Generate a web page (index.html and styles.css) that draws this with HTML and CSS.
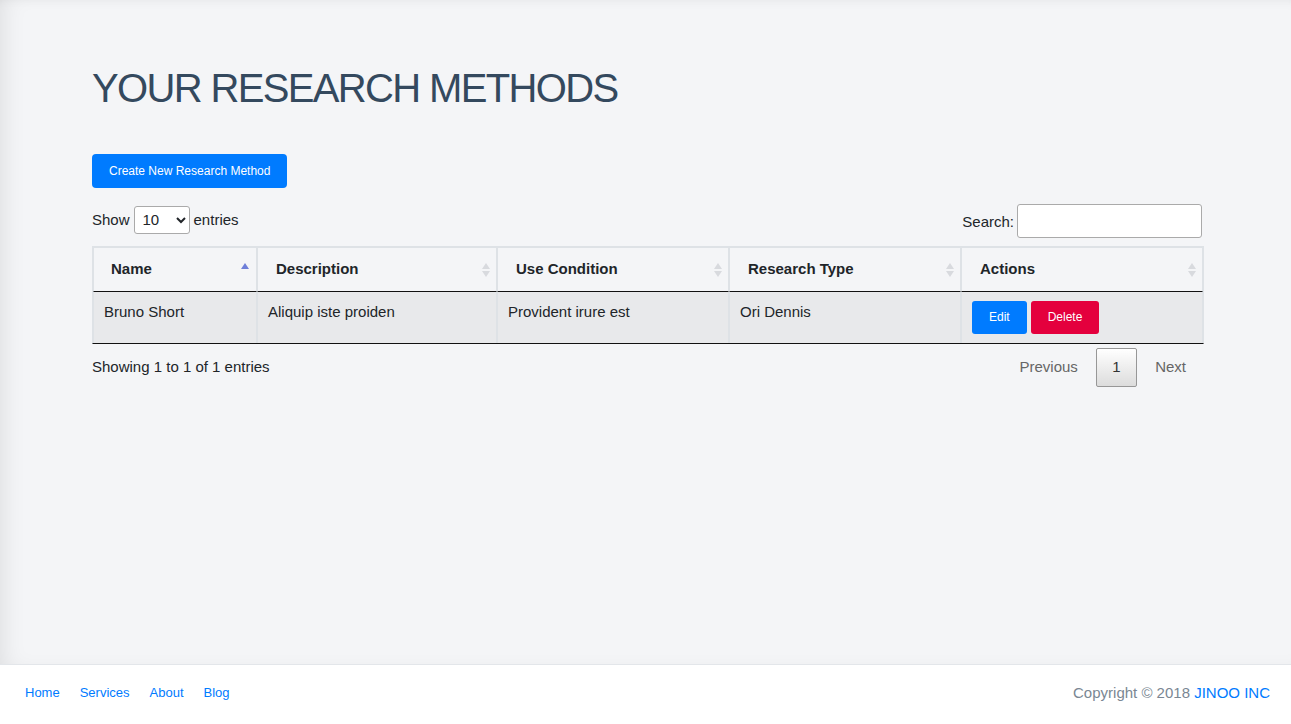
FILE: index.html
```html
<!DOCTYPE html>
<html lang="en">
<head>
<meta charset="utf-8">
<title>Your Research Methods</title>
<link rel="stylesheet" href="styles.css">
</head>
<body>
<main class="main">
  <h1 class="page-title">YOUR RESEARCH METHODS</h1>
  <a class="btn btn-primary btn-create" href="#">Create New Research Method</a>

  <div class="dt-controls">
    <label class="dt-length">Show
      <select class="dt-select">
        <option>10</option>
        <option>25</option>
        <option>50</option>
        <option>100</option>
      </select>
      entries</label>
    <label class="dt-search">Search:<input class="dt-input" type="search"></label>
  </div>

  <table class="dt-table">
    <thead>
      <tr>
        <th class="col-name sort-asc">Name</th>
        <th class="col-desc sortable">Description</th>
        <th class="col-use sortable">Use Condition</th>
        <th class="col-type sortable">Research Type</th>
        <th class="col-act sortable">Actions</th>
      </tr>
    </thead>
    <tbody>
      <tr>
        <td>Bruno Short</td>
        <td>Aliquip iste proiden</td>
        <td>Provident irure est</td>
        <td>Ori Dennis</td>
        <td>
          <div class="actions">
            <a class="btn btn-small btn-primary" href="#">Edit</a>
            <a class="btn btn-small btn-danger" href="#">Delete</a>
          </div>
        </td>
      </tr>
    </tbody>
  </table>

  <div class="dt-bottom">
    <div class="dt-info">Showing 1 to 1 of 1 entries</div>
    <div class="dt-paging">
      <a class="page-btn disabled" href="#">Previous</a>
      <a class="page-btn current" href="#">1</a>
      <a class="page-btn disabled" href="#">Next</a>
    </div>
  </div>
</main>

<footer class="footer">
  <nav class="footer-nav">
    <a href="#">Home</a>
    <a href="#">Services</a>
    <a href="#">About</a>
    <a href="#">Blog</a>
  </nav>
  <div class="copyright">Copyright © 2018 <a href="#">JINOO INC</a></div>
</footer>
</body>
</html>
```

FILE: styles.css
```css
* { box-sizing: border-box; }

html, body {
  margin: 0;
  height: 100%;
}

body {
  display: flex;
  flex-direction: column;
  font-family: "Liberation Sans", Arial, sans-serif;
  font-size: 15px;
  color: #212529;
  background: #f4f5f7;
}

a { text-decoration: none; }

.main {
  flex: 1;
  padding: 64px 87px 0 92px;
  background: #f4f5f7;
  box-shadow: inset 14px 0 24px -12px rgba(0, 0, 0, 0.10),
              inset 0 8px 10px -8px rgba(0, 0, 0, 0.05);
}

.page-title {
  margin: 0;
  font-size: 40px;
  line-height: 48px;
  font-weight: 400;
  letter-spacing: -1.65px;
  color: #34495e;
}

.btn {
  display: inline-block;
  color: #fff;
  border-radius: 4px;
  font-size: 12px;
  line-height: 18px;
  white-space: nowrap;
}

.btn-primary { background: #007bff; }
.btn-danger { background: #e4003d; }

.btn-create {
  margin-top: 42px;
  padding: 8px 17px;
  text-align: center;
}

.dt-controls {
  display: flex;
  justify-content: space-between;
  align-items: center;
  margin-top: 16px;
  height: 34px;
}

.dt-length {
  display: flex;
  align-items: center;
  gap: 4px;
  margin-top: -3px;
}

.dt-select {
  width: 56px;
  height: 28px;
  padding: 0 4px;
  font-family: inherit;
  font-size: 15px;
  color: #212529;
  background: #fff;
  border: 1px solid #aaa;
  border-radius: 3px;
}

.dt-search {
  display: flex;
  align-items: center;
  gap: 3px;
  margin-right: 2px;
}

.dt-input {
  width: 185px;
  height: 34px;
  background: #fff;
  border: 1px solid #aaa;
  border-radius: 3px;
}

.dt-table {
  width: 1112px;
  table-layout: fixed;
  margin-top: 8px;
  border-collapse: separate;
  border-spacing: 0;
  border-top: 1px solid #dee2e6;
  border-left: 1px solid #dee2e6;
  border-right: 1px solid #dee2e6;
  border-bottom: 1px solid #111;
}

.dt-table th {
  position: relative;
  text-align: left;
  font-weight: 700;
  padding: 10px 18px;
  line-height: 22.5px;
  border: 1px solid #dee2e6;
  border-bottom: 1px solid #111;
}

.dt-table th.col-name { padding-left: 17px; }

.col-name { width: 164px; }
.col-desc { width: 240px; }
.col-use { width: 232px; }
.col-type { width: 232px; }
.col-act { width: 242px; }

.dt-table td {
  vertical-align: top;
  padding: 9px 10px;
  line-height: 22.5px;
  background: #e8e9eb;
  border-left: 1px solid #dee2e6;
  border-right: 1px solid #dee2e6;
}

.sortable::before,
.sortable::after,
.sort-asc::before {
  content: "";
  position: absolute;
  right: 6px;
  width: 0;
  height: 0;
  border-left: 4px solid transparent;
  border-right: 4px solid transparent;
}

.sortable::before {
  top: 15px;
  border-bottom: 6px solid #d8dade;
}

.sortable::after {
  top: 23px;
  border-top: 6px solid #d8dade;
}

.sort-asc::before {
  top: 15px;
  right: 7px;
  border-bottom: 6px solid #6f7fd9;
}

.actions {
  display: flex;
  gap: 4px;
}

.btn-small {
  padding: 7px 17px;
  line-height: 19px;
  border-radius: 3px;
}

.dt-bottom {
  display: flex;
  justify-content: space-between;
  align-items: flex-start;
  width: 1112px;
}

.dt-info {
  padding-top: 14px;
}

.dt-paging {
  display: flex;
  margin-top: 4px;
  margin-right: 2px;
}

.page-btn {
  display: block;
  padding: 7.5px 15px;
  margin-left: 2px;
  line-height: 22.5px;
  border: 1px solid transparent;
  border-radius: 2px;
  color: #666;
}

.page-btn.current {
  color: #333;
  border-color: #979797;
  background: linear-gradient(to bottom, #ffffff 0%, #dcdcdc 100%);
  padding: 7.5px 15.5px;
}

.footer {
  flex: 0 0 60px;
  display: flex;
  justify-content: space-between;
  align-items: center;
  padding: 0 21px 4px 25px;
  background: #fff;
  border-top: 1px solid #e3e6ea;
}

.footer-nav {
  display: flex;
  gap: 20px;
  font-size: 13px;
}

.footer-nav a { color: #007bff; }

.copyright {
  font-size: 15px;
  color: #7a8793;
}

.copyright a { color: #007bff; }
```
